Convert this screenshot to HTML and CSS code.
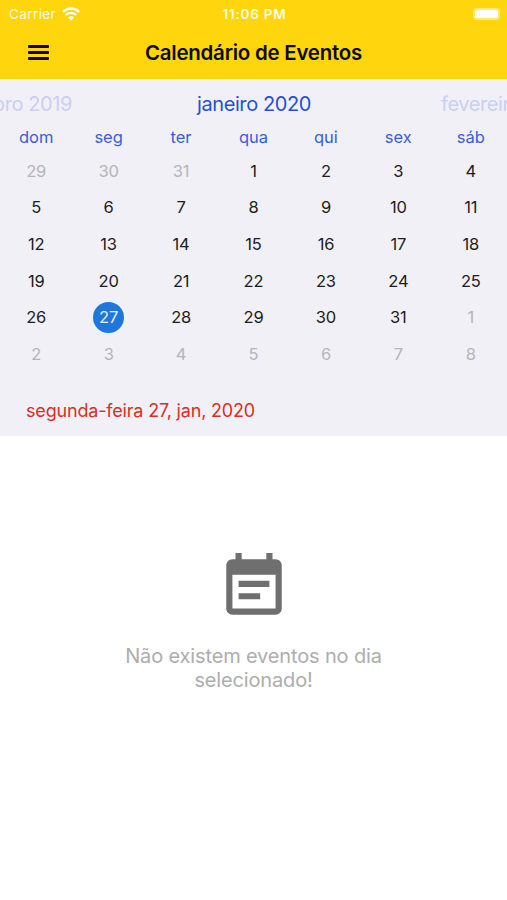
FILE: index.html
```
<!DOCTYPE html>
<html lang="pt">
<head>
    <meta charset="UTF-8">
    <meta name="viewport" content="width=device-width, initial-scale=1.0">
    <title>Calendário de Eventos</title>
    <link rel="stylesheet" href="styles.css">
</head>
<body>
    <header>
        <div class="status-bar">
            <div class="carrier">
                <span>Carrier</span>
                <svg class="wifi" viewBox="0 0 18 14" width="18" height="14">
                    <path d="M1 4.8a11.5 11.5 0 0 1 16 0" />
                    <path d="M3.8 8a7.5 7.5 0 0 1 10.4 0" />
                    <path class="dot" d="M9 13.6 5.9 10.6a4.5 4.5 0 0 1 6.2 0z" />
                </svg>
            </div>
            <span class="clock">11:06 PM</span>
            <div class="battery"><span></span></div>
        </div>
        <div class="nav-bar">
            <button type="button" class="menu-btn" aria-label="Menu">
                <span></span><span></span><span></span>
            </button>
            <h1>Calendário de Eventos</h1>
        </div>
    </header>

    <section class="calendar">
        <!-- meses -->
        <div class="months">
            <span class="prev">dezembro 2019</span>
            <span class="current">janeiro 2020</span>
            <span class="next">fevereiro 2020</span>
        </div>
        <!-- dias da semana -->
        <div class="weekdays">
            <span>dom</span><span>seg</span><span>ter</span><span>qua</span><span>qui</span><span>sex</span><span>sáb</span>
        </div>
        <!-- dias -->
        <div class="days">
            <span class="out">29</span><span class="out">30</span><span class="out">31</span><span>1</span><span>2</span><span>3</span><span>4</span>
            <span>5</span><span>6</span><span>7</span><span>8</span><span>9</span><span>10</span><span>11</span>
            <span>12</span><span>13</span><span>14</span><span>15</span><span>16</span><span>17</span><span>18</span>
            <span>19</span><span>20</span><span>21</span><span>22</span><span>23</span><span>24</span><span>25</span>
            <span>26</span><span class="selected">27</span><span>28</span><span>29</span><span>30</span><span>31</span><span class="out">1</span>
            <span class="out">2</span><span class="out">3</span><span class="out">4</span><span class="out">5</span><span class="out">6</span><span class="out">7</span><span class="out">8</span>
        </div>
        <p class="selected-date">segunda-feira 27, jan, 2020</p>
    </section>

    <main class="empty">
        <svg viewBox="0 0 24 24" width="74" height="74">
            <path d="M17 10H7v2h10v-2zm2-7h-1V1h-2v2H8V1H6v2H5c-1.11 0-1.99.9-1.99 2L3 19c0 1.1.89 2 2 2h14c1.1 0 2-.9 2-2V5c0-1.1-.9-2-2-2zm0 16H5V8h14v11zm-5-5H7v2h7v-2z" />
        </svg>
        <p>Não existem eventos no dia selecionado!</p>
    </main>
</body>
</html>
```
FILE: styles.css
```
* {
    box-sizing: border-box;
}
body {
    margin: 0;
    background: #fff;
    font-family: Inter, "Liberation Sans", sans-serif;
    overflow-x: hidden;
}
header {
    height: 79px;
    background: #ffd60d;
}
.status-bar {
    display: grid;
    grid-template-columns: 1fr auto 1fr;
    align-items: center;
    height: 27px;
    padding: 0 7px 0 9px;
    color: #fffbe0;
    font-size: 13.5px;
}
.carrier {
    display: flex;
    align-items: center;
    gap: 6px;
    letter-spacing: 0.4px;
}
.wifi {
    fill: none;
    stroke: #fff;
    stroke-width: 2.4;
}
.wifi .dot {
    fill: #fff;
    stroke: none;
}
.clock {
    font-size: 13.5px;
    font-weight: 600;
    letter-spacing: 0.8px;
}
.battery {
    justify-self: end;
    width: 27px;
    height: 12px;
    padding: 2px;
    border-radius: 4px;
    background: #ffe873;
}
.battery span {
    display: block;
    height: 8px;
    border-radius: 2px;
    background: #fff;
}
.nav-bar {
    display: grid;
    grid-template-columns: 78px 1fr 78px;
    align-items: center;
    height: 51px;
}
.menu-btn {
    display: flex;
    flex-direction: column;
    gap: 3px;
    width: 21px;
    margin-left: 28px;
    padding: 0;
    border: none;
    background: none;
}
.menu-btn span {
    height: 3px;
    border-radius: 1px;
    background: #0d0b00;
}
h1 {
    margin: 0;
    text-align: center;
    font-size: 20.5px;
    font-weight: 600;
    letter-spacing: -0.25px;
    color: #0d0b00;
}
.calendar {
    height: 357px;
    background: #f1f0f6;
}
.months {
    display: grid;
    grid-template-columns: 72px 1fr 66px;
    height: 41px;
    padding-top: 13px;
    line-height: 24px;
    font-size: 20px;
    letter-spacing: -0.4px;
    white-space: nowrap;
    overflow: hidden;
    color: #c9cff1;
}
.prev {
    justify-self: end;
}
.current {
    padding-right: 5px;
    text-align: center;
    color: #2450d8;
}
.weekdays,
.days {
    display: grid;
    grid-template-columns: repeat(7, 1fr);
    justify-items: center;
    align-items: center;
    font-size: 16.5px;
}
.weekdays {
    height: 33px;
    padding-top: 1px;
    color: #3560dc;
}
.days {
    grid-auto-rows: 36.6px;
    letter-spacing: -0.2px;
    color: #1c1c20;
}
.days span {
    width: 31px;
    height: 31px;
    line-height: 31px;
    text-align: center;
}
.days .out {
    color: #b5b5b9;
}
.days .selected {
    border-radius: 50%;
    background: #1f77db;
    color: #e4efff;
}
.selected-date {
    margin: 26px 0 0 26px;
    line-height: 24px;
    font-size: 18px;
    letter-spacing: -0.18px;
    color: #dc2e22;
}
.empty {
    display: flex;
    flex-direction: column;
    align-items: center;
    padding-top: 114px;
}
.empty svg {
    fill: #6f6f6f;
}
.empty p {
    width: 290px;
    margin: 20px 0 0;
    text-align: center;
    line-height: 24px;
    font-size: 20px;
    letter-spacing: -0.15px;
    color: #adadad;
}
```
